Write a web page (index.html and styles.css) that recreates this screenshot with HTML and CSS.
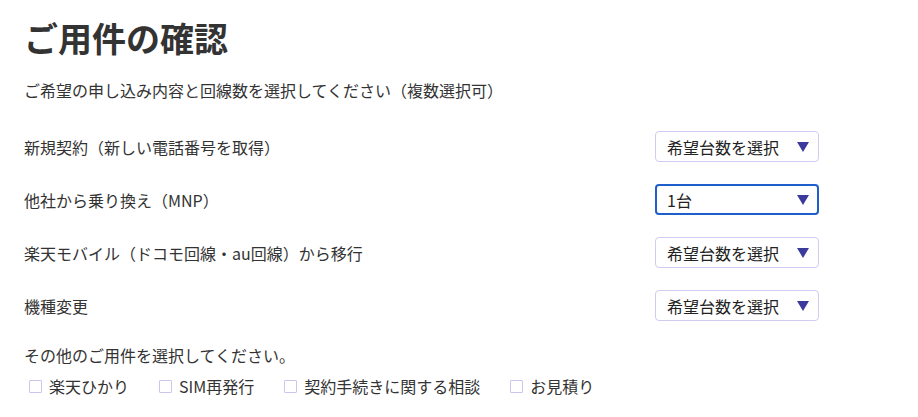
FILE: index.html
```html
<!DOCTYPE html>
<html lang="ja">
<head>
<meta charset="utf-8">
<link rel="stylesheet" href="styles.css">
</head>
<body>
<div class="page">
  <h1 class="title">ご用件の確認</h1>
  <p class="lead">ご希望の申し込み内容と回線数を選択してください（複数選択可）</p>
  <div class="rows">
    <div class="row">
      <span class="label">新規契約（新しい電話番号を取得）</span>
      <div class="select"><span>希望台数を選択</span><i class="arrow"></i></div>
    </div>
    <div class="row">
      <span class="label">他社から乗り換え（MNP）</span>
      <div class="select focused"><span>1台</span><i class="arrow"></i></div>
    </div>
    <div class="row">
      <span class="label">楽天モバイル（ドコモ回線・au回線）から移行</span>
      <div class="select"><span>希望台数を選択</span><i class="arrow"></i></div>
    </div>
    <div class="row">
      <span class="label">機種変更</span>
      <div class="select"><span>希望台数を選択</span><i class="arrow"></i></div>
    </div>
  </div>
  <p class="other">その他のご用件を選択してください。</p>
  <div class="checks">
    <label class="check"><span class="box"></span>楽天ひかり</label>
    <label class="check"><span class="box"></span>SIM再発行</label>
    <label class="check"><span class="box"></span>契約手続きに関する相談</label>
    <label class="check"><span class="box"></span>お見積り</label>
  </div>
</div>
</body>
</html>
```

FILE: styles.css
```css
html, body {
  margin: 0;
  padding: 0;
  background: #fff;
}
body {
  font-family: "Noto Sans CJK JP", "Noto Sans", sans-serif;
  color: #333;
  font-size: 16px;
}
.page {
  padding: 16px 24px 0 24px;
  width: 795px;
}
.title {
  margin: 0;
  font-size: 34px;
  font-weight: 700;
  line-height: 44px;
  color: #333;
}
.lead {
  margin: 18px 0 0 0;
  line-height: 24px;
}
.rows {
  margin-top: 18px;
}
.row {
  height: 53px;
  display: flex;
  align-items: center;
  justify-content: space-between;
}
.select {
  box-sizing: border-box;
  width: 164px;
  height: 31px;
  border: 1px solid #cfcdf2;
  border-radius: 4px;
  display: flex;
  align-items: center;
  justify-content: space-between;
  padding: 0 9px 0 11px;
  font-size: 16px;
  color: #222;
}
.select.focused {
  border: 2px solid #1f5fcc;
  padding: 0 8px 0 10px;
}
.arrow {
  width: 0;
  height: 0;
  border-left: 6px solid transparent;
  border-right: 6px solid transparent;
  border-top: 10px solid #3c3a9c;
}
.other {
  margin: 11px 0 0 0;
  line-height: 24px;
}
.checks {
  display: flex;
  gap: 25px;
  margin-top: 7px;
  line-height: 24px;
}
.check {
  display: flex;
  align-items: center;
}
.box {
  box-sizing: border-box;
  width: 13px;
  height: 13px;
  border: 1px solid #c9c7f0;
  border-radius: 1px;
  margin: 1px 7px 0 5px;
}
```
